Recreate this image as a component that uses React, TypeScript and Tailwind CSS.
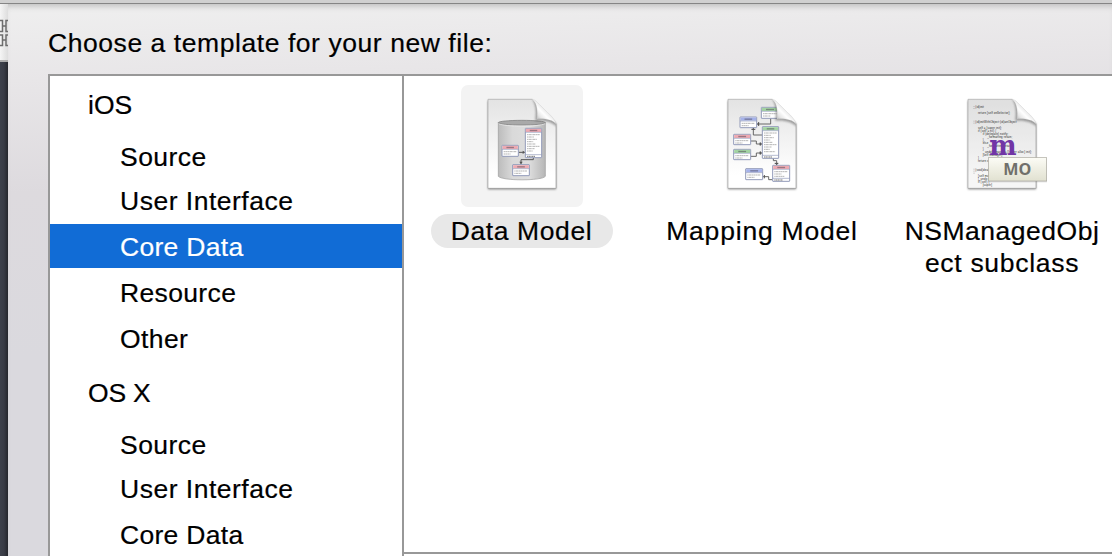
import type { ReactNode } from 'react';

type Row = { label: string; cls: string };

const rows: Row[] = [
  { label: 'iOS', cls: 'pl-[38px] mb-2' },
  { label: 'Source', cls: 'pl-[70px] tracking-[0.45px]' },
  { label: 'User Interface', cls: 'pl-[70px] mb-0.5 tracking-[0.5px]' },
  { label: 'Core Data', cls: 'pl-[70px] mb-0.5 bg-[#116cd6] text-white tracking-[0.3px]' },
  { label: 'Resource', cls: 'pl-[70px] mb-0.5 tracking-[0.35px]' },
  { label: 'Other', cls: 'pl-[70px] mb-2.5 tracking-[0.4px]' },
  { label: 'OS X', cls: 'pl-[38px] mb-2 tracking-[-0.2px]' },
  { label: 'Source', cls: 'pl-[70px] tracking-[0.45px]' },
  { label: 'User Interface', cls: 'pl-[70px] mb-0.5 tracking-[0.5px]' },
  { label: 'Core Data', cls: 'pl-[70px] tracking-[0.3px]' },
];

function Sheet({ id, children }: { id: string; children: ReactNode }) {
  return (
    <svg viewBox="3 15 366 366" className="h-[122px] w-[122px]">
      <defs>
        <linearGradient id={id + 'p'} x1="0" y1="0" x2="0" y2="1">
          <stop offset="0" stopColor="#e3e3e3" />
          <stop offset="0.35" stopColor="#efefef" />
          <stop offset="0.85" stopColor="#fff" />
        </linearGradient>
        <linearGradient id={id + 'f'} gradientUnits="userSpaceOnUse" x1="229" y1="119" x2="262" y2="86">
          <stop offset="0" stopColor="#b8b8b8" />
          <stop offset="0.3" stopColor="#e6e6e6" />
          <stop offset="0.6" stopColor="#fff" />
          <stop offset="1" stopColor="#dedede" />
        </linearGradient>
        <filter id={id + 's'} x="-10%" y="-10%" width="120%" height="120%">
          <feGaussianBlur stdDeviation="3" />
        </filter>
        <clipPath id={id + 'c'}>
          <path d="M84 58H217L288 131V325H84Z" />
        </clipPath>
      </defs>
      <path d="M84 62H217L288 131V328H84Z" fill="#000" opacity=".5" filter={`url(#${id}s)`} />
      <path d="M84 58H217L288 131V325H84Z" fill={`url(#${id}p)`} />
      <g clipPath={`url(#${id}c)`}>
        {children}
        <path d="M217 58C229 74 229 97 226 122C252 119 276 125 290 140V120L230 60Z" fill="#333" opacity=".45" filter={`url(#${id}s)`} />
      </g>
      <path d="M217 58C232 71 233 94 231 117C254 115 276 119 288 131C285 120 275 108 262 97L238 73C231 66 225 59 217 58Z" fill={`url(#${id}f)`} stroke="#c4c4c4" strokeWidth="1" />
      <path d="M84 325V58H217" fill="none" stroke="#aaa" strokeWidth="2" />
      <path d="M84 325H288V131" fill="none" stroke="#999" strokeWidth="2" />
    </svg>
  );
}

function Entity({ x, y, w, h, c, foot }: { x: number; y: number; w: number; h: number; c: string; foot?: boolean }) {
  const n = Math.floor((h - (foot ? 26 : 16)) / 7);
  const widths = [0.78, 0.42, 0.6, 0.38, 0.52, 0.76, 0.46, 0.35, 0.68, 0.48];
  return (
    <g>
      <rect x={x} y={y} width={w} height={h} rx="1" fill="#fff" stroke="#929bb9" strokeWidth="3" />
      <rect x={x + 1.5} y={y + 1.5} width={w - 3} height="9.5" fill={c} />
      <path d={`M${x + w * 0.27} ${y + 6.5}h${w * 0.46}`} stroke="#4a4452" strokeWidth="4" opacity=".5" />
      <path d={`M${x} ${y + 12}h${w}`} stroke="#929bb9" strokeWidth="2" />
      {Array.from({ length: n }, (_, i) => (
        <path key={i} d={`M${x + 5} ${y + 19 + i * 7}h${w * widths[i % 10]}`} stroke="#777" strokeWidth="2.5" strokeDasharray="4 1 7 1" opacity=".65" />
      ))}
      {foot && (
        <>
          <path d={`M${x} ${y + h - 9}h${w}`} stroke="#929bb9" strokeWidth="2" />
          <path d={`M${x + 5} ${y + h - 4}h${w * 0.5}`} stroke="#777" strokeWidth="3" strokeDasharray="4 1" />
        </>
      )}
    </g>
  );
}

const PINK = '#eeaab2';
const GREEN = '#a3d4a2';
const BLUE = '#a5b2ea';

function DataModelIcon() {
  return (
    <Sheet id="dm">
      <defs>
        <linearGradient id="cyl" x1="0" x2="1">
          <stop offset="0" stopColor="#bcbcbc" />
          <stop offset=".3" stopColor="#d9d9d9" />
          <stop offset=".65" stopColor="#dedede" />
          <stop offset="1" stopColor="#b6b6b6" />
        </linearGradient>
      </defs>
      <path d="M115 128V289C126 303 246 303 256 289V128Z" fill="url(#cyl)" stroke="#999" strokeWidth="2" />
      <ellipse cx="185.500" cy="128" rx="70.500" ry="7" fill="#a9a9a9" stroke="#858585" strokeWidth="2.500" />
      <path d="M116 131C134 141 237 141 255 131" fill="none" stroke="#eee" strokeWidth="2" />
      <path d="M176 217H192M220 233V239H183V247" fill="none" stroke="#555" strokeWidth="3" />
      <path d="M188 212L196 217L188 222ZM178 245H188L183 254Z" fill="#555" />
      <Entity x={126} y={196} w={49} h={33} c={PINK} />
      <Entity x={196} y={145} w={49} h={88} c={PINK} foot />
      <Entity x={158} y={254} w={50} h={33} c={PINK} />
    </Sheet>
  );
}

function MappingModelIcon() {
  return (
    <Sheet id="mm">
      <path d="M212 115V132H171M160 143V165H187M152 183H169V192H187M152 229H169V219H187M220 235V242H230V256M217 299H206V290H188" fill="none" stroke="#666" strokeWidth="3" />
      <path d="M176 126V138M154 148H166M181 187V197M181 214V224M224 250H235M193 285V295" stroke="#555" strokeWidth="3" />
      <path d="M170 132L177 128V136ZM160 143L156 150H164ZM187 192L179 188V196ZM187 219L179 215V223ZM230 256L225 249H235Z" fill="#555" />
      <Entity x={184} y={82} w={52} h={33} c={GREEN} />
      <Entity x={120} y={111} w={50} h={32} c={BLUE} />
      <Entity x={101} y={163} w={51} h={31} c={PINK} />
      <Entity x={101} y={208} w={51} h={31} c={GREEN} />
      <Entity x={187} y={140} w={49} h={95} c={GREEN} foot />
      <Entity x={137} y={266} w={51} h={33} c={BLUE} />
      <Entity x={218} y={256} w={51} h={48} c={PINK} foot />
    </Sheet>
  );
}

const code: [number, number, string][] = [
  [106, 84, '(id)init'],
  [114, 102, 'return [self onSelector];'],
  [106, 128, '(id)initWithObject:(id)anObject'],
  [114, 146, 'self = [super init];'],
  [114, 155, 'if (self = nil) {'],
  [128, 164, 'if (delegate) notify;'],
  [142, 173, '_formatting retain;'],
  [128, 182, '}'],
  [128, 191, 'else'],
  [142, 200, '_formatting retain;'],
  [128, 209, '}'],
  [130, 218, '_undoManager = [[super alloc] init];'],
  [128, 227, '[self manager];'],
  [114, 236, '}'],
  [114, 245, 'return self;'],
  [106, 272, '(void)dealloc'],
  [114, 290, '[self manager'],
  [114, 299, '[_undo release];'],
  [114, 308, 'if (self) {'],
  [128, 318, '[super]'],
];

function ManagedObjectIcon() {
  return (
    <div className="relative [-webkit-text-stroke:0]">
      <Sheet id="mo">
        <rect x="84" y="58" width="204" height="267" fill="#ccc" opacity=".18" />
        <g fontFamily="Liberation Sans" fontSize="8.4" letterSpacing="0.4" fill="#222">
          {code.map(([x, y, s]) => (
            <text key={y} x={x} y={y}>{s}</text>
          ))}
        </g>
        <path d="M102 78V88M102 122V132M102 266V282" stroke="#999" strokeWidth="2" strokeDasharray="3 3" />
        <text x="148" y="225" textLength="82" lengthAdjust="spacingAndGlyphs" fontFamily="DejaVu Serif" fontWeight="bold" fontSize="84" fill="#7135a6">m</text>
      </Sheet>
      <svg viewBox="3 15 366 366" className="absolute inset-0 h-[122px] w-[122px]">
        <defs>
          <linearGradient id="tag" x1="0" y1="0" x2="0" y2="1">
            <stop offset="0" stopColor="#fcfcf6" />
            <stop offset=".5" stopColor="#eeeee2" />
            <stop offset="1" stopColor="#e1e1d1" />
          </linearGradient>
        </defs>
        <rect x="145" y="235" width="176" height="72" fill="#000" opacity=".13" />
        <rect x="145" y="233" width="175" height="70" fill="url(#tag)" stroke="#aaa99f" strokeWidth="2" />
        <text x="190" y="284" textLength="84" lengthAdjust="spacingAndGlyphs" fontFamily="Open Sans" fontWeight="bold" fontSize="46" fill="#70706b">MO</text>
      </svg>
    </div>
  );
}

function Template({ icon, selected, children }: { icon: ReactNode; selected?: boolean; children: ReactNode }) {
  return (
    <div className="flex w-60 shrink-0 flex-col items-center">
      <div className={selected ? 'rounded-[7px] bg-[#f3f3f3]' : ''}>{icon}</div>
      <div className="mt-[7px] text-center leading-8">{children}</div>
    </div>
  );
}

export default function App() {
  return (
    <div className="flex h-[556px] w-[1112px] flex-col overflow-hidden bg-[#d1d1d1] text-[26.5px] text-black [-webkit-text-stroke:0.2px]" style={{ fontFamily: '"Liberation Sans", Arial, sans-serif' }}>
      <div className="h-1 shrink-0 border-b border-[#858585] bg-[#d0d0d0]" />
      <div className="flex min-h-0 flex-1">
        <div className="flex w-2 shrink-0 flex-col bg-[#383b45]">
          <div className="h-[58px] border-b-2 border-[#aaa] bg-gradient-to-r from-[#f5f5f5] to-[#ddd]">
            <svg viewBox="0 0 8 56" className="h-14 w-2" fill="none" stroke="#6d6d6d" strokeWidth="1.500">
              <path d="M0 16.500H2.500V27.500H0M2.500 22H6M8 16.500H6V27.500H8M0 31H2.500V41.500H0M2.500 36H6M8 31H6V41.500H8" />
            </svg>
          </div>
          <div className="flex-1 bg-gradient-to-r from-[#3d414b] via-[#383b45] to-[#25272d]" />
        </div>
        <div className="flex min-w-0 flex-1 flex-col bg-[linear-gradient(178deg,#efefef_0%,#e8e6e8_13%,#dddade_32%,#dad9de_60%)] pl-10 shadow-[inset_0_6px_6px_-4px_#bbb]">
          <div className="h-[70px] shrink-0 whitespace-nowrap pt-6 leading-[31px] tracking-[0.56px]">Choose a template for your new file:</div>
          <div className="flex min-h-0 flex-1 border-l-2 border-t-2 border-[#989898] bg-white">
            <div className="w-[352px] shrink-0 overflow-hidden pt-[6px]">
              {rows.map((r, i) => (
                <div key={i} className={'h-11 whitespace-nowrap leading-[46px] ' + r.cls}>{r.label}</div>
              ))}
            </div>
            <div className="flex min-w-0 flex-1 flex-col border-l-2 border-[#989898]">
              <div className="flex h-[478px] shrink-0 overflow-hidden border-b-2 border-[#989898] pt-[9px] -ml-px">
                <div className="flex shrink-0 -ml-px">
                  <Template icon={<DataModelIcon />} selected>
                    <div className="-ml-px h-[34px] w-[182px] rounded-full bg-[#e8e8e8] leading-[34px] tracking-[0.6px]">Data Model</div>
                  </Template>
                  <Template icon={<MappingModelIcon />}>
                    <div className="leading-[34px] tracking-[0.8px]">Mapping Model</div>
                  </Template>
                  <Template icon={<ManagedObjectIcon />}>
                    <div className="pt-px tracking-[0.5px]">NSManagedObj</div>
                    <div className="tracking-[0.7px]">ect subclass</div>
                  </Template>
                </div>
              </div>
            </div>
          </div>
        </div>
      </div>
    </div>
  );
}
